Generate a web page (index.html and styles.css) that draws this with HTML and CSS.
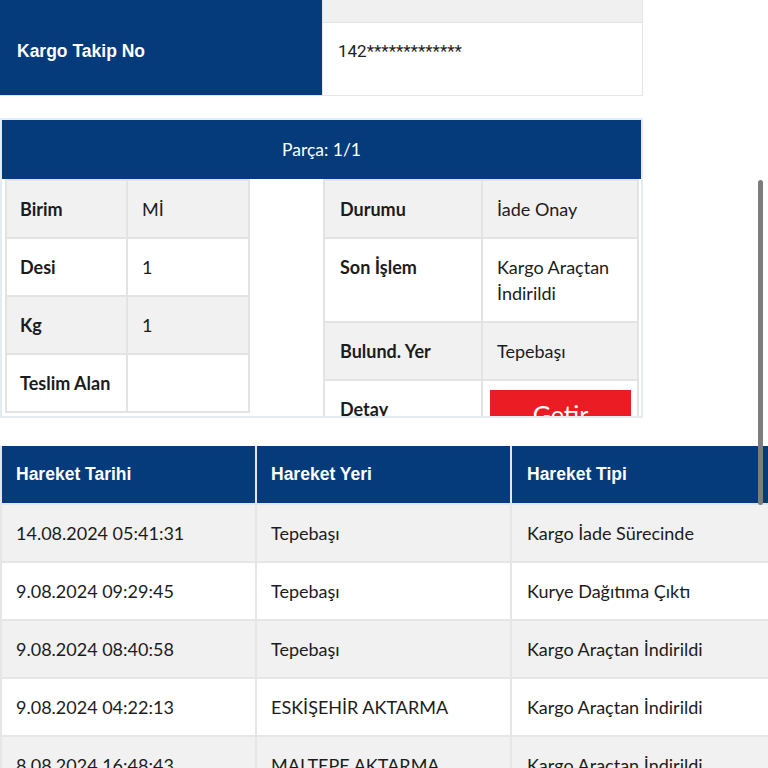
FILE: index.html
```html
<!DOCTYPE html>
<html lang="tr">
<head>
<meta charset="utf-8">
<title>Kargo Takip</title>
<link rel="stylesheet" href="styles.css">
</head>
<body>
<div class="page">
  <div class="info">
    <div class="info-label">Kargo Takip No</div>
    <div class="info-values">
      <div class="info-prev"></div>
      <div class="info-val">142*************</div>
    </div>
  </div>

  <div class="panel">
    <div class="panel-head">Parça: 1/1</div>
    <div class="panel-body">
      <div class="ktable ktable-left">
        <div class="cell lbl gray">Birim</div><div class="cell gray">Mİ</div>
        <div class="cell lbl">Desi</div><div class="cell">1</div>
        <div class="cell lbl gray">Kg</div><div class="cell gray">1</div>
        <div class="cell lbl">Teslim Alan</div><div class="cell"></div>
      </div>
      <div class="ktable ktable-right">
        <div class="cell lbl gray">Durumu</div><div class="cell gray">İade Onay</div>
        <div class="cell lbl">Son İşlem</div><div class="cell">Kargo Araçtan İndirildi</div>
        <div class="cell lbl gray">Bulund. Yer</div><div class="cell gray">Tepebaşı</div>
        <div class="cell lbl">Detay</div><div class="cell btn-cell"><button class="btn">Getir</button></div>
      </div>
    </div>
  </div>

  <div class="moves">
    <div class="mh">Hareket Tarihi</div><div class="mh">Hareket Yeri</div><div class="mh">Hareket Tipi</div>
    <div class="mc gray">14.08.2024 05:41:31</div><div class="mc gray">Tepebaşı</div><div class="mc gray">Kargo İade Sürecinde</div>
    <div class="mc">9.08.2024 09:29:45</div><div class="mc">Tepebaşı</div><div class="mc">Kurye Dağıtıma Çıktı</div>
    <div class="mc gray">9.08.2024 08:40:58</div><div class="mc gray">Tepebaşı</div><div class="mc gray">Kargo Araçtan İndirildi</div>
    <div class="mc">9.08.2024 04:22:13</div><div class="mc">ESKİŞEHİR AKTARMA</div><div class="mc">Kargo Araçtan İndirildi</div>
    <div class="mc gray">8.08.2024 16:48:43</div><div class="mc gray">MALTEPE AKTARMA</div><div class="mc gray">Kargo Araçtan İndirildi</div>
  </div>
</div>
<div class="scrollbar"></div>
</body>
</html>
```
FILE: styles.css
```css
html, body {
  margin: 0;
  padding: 0;
  overflow: hidden;
  background: #ffffff;
}
body {
  font-family: Lato, "Noto Sans", sans-serif;
  color: #1c1c1c;
  width: 768px;
  height: 768px;
  position: relative;
}
.page {
  width: 768px;
}

/* top info */
.info {
  display: grid;
  grid-template-columns: 322px 320px;
  column-gap: 1px;
  width: 643px;
  height: 96px;
  background: #e4e4e4;
}
.info-label {
  background: #053a7b;
  color: #ffffff;
  font-family: "Liberation Sans", Arial, sans-serif;
  font-weight: bold;
  font-size: 17.5px;
  line-height: 22px;
  padding: 40px 0 0 17px;
  height: 95px;
  box-sizing: border-box;
}
.info-values {
  display: flex;
  flex-direction: column;
  gap: 1px;
  border-right: 1px solid #e4e4e4;
  height: 95px;
}
.info-prev {
  height: 22px;
  background: #f0f0f0;
}
.info-val {
  flex: 1;
  background: #ffffff;
  font-family: Roboto, "Liberation Sans", sans-serif;
  font-size: 17px;
  line-height: 22px;
  padding: 17px 0 0 15px;
  color: #222222;
}

/* panel */
.panel {
  margin-top: 22px;
  width: 643px;
  border: 2px solid #e6ebf0;
  border-top-color: #e3eef8;
  box-sizing: border-box;
}
.panel-head {
  background: #053a7b;
  color: #ffffff;
  height: 59px;
  line-height: 59px;
  text-align: center;
  font-size: 17.5px;
}
.panel-body {
  height: 237px;
  overflow: hidden;
  display: flex;
  align-items: flex-start;
  padding-left: 3px;
  gap: 73px;
}
.ktable {
  display: grid;
  gap: 2px;
  padding: 2px;
  background: #e3e3e3;
  font-size: 18px;
}
.ktable-left {
  grid-template-columns: 119px 120px;
}
.ktable-right {
  grid-template-columns: 156px 154px;
}
.cell {
  background: #ffffff;
  padding: 15px 12px 15px 14px;
  line-height: 26px;
}
.cell.lbl {
  font-weight: bold;
  padding-left: 13px;
}
.ktable-right .cell.lbl {
  padding-left: 15px;
}
.gray {
  background: #f1f1f1;
}
.btn-cell {
  padding: 9px 7px 0 7px;
}
.btn {
  display: block;
  width: 141px;
  height: 44px;
  border: none;
  background: #ec1c24;
  color: #ffffff;
  font-family: Lato, "Noto Sans", sans-serif;
  font-size: 25px;
  line-height: 30px;
  padding: 0;
  padding-top: 4px;
}

/* moves table */
.moves {
  margin-top: 28px;
  width: 790px;
  display: grid;
  grid-template-columns: 253px 253px 280px;
  gap: 2px;
  padding-left: 2px;
  background: #e6e6e6;
  box-sizing: border-box;
}
.mh {
  background: #053a7b;
  color: #ffffff;
  font-family: "Liberation Sans", Arial, sans-serif;
  font-weight: bold;
  font-size: 17.5px;
  height: 57px;
  line-height: 57px;
  padding-left: 14px;
}
.mh:nth-child(3) {
  padding-left: 15px;
}
.mc {
  background: #ffffff;
  font-size: 18px;
  line-height: 26px;
  padding: 15px 14px;
  white-space: nowrap;
}
.mc:nth-child(3n) {
  padding-left: 15px;
}
.mc.gray {
  background: #f1f1f1;
}

.scrollbar {
  position: absolute;
  left: 758px;
  top: 180px;
  width: 5px;
  height: 325px;
  border-radius: 3px;
  background: #7d7d7d;
}
```
